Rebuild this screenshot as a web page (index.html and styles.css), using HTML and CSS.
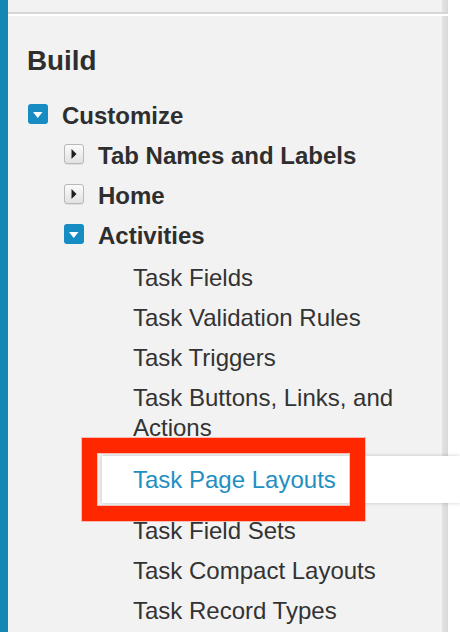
FILE: index.html
```html
<!DOCTYPE html>
<html lang="en">
<head>
<meta charset="utf-8">
<title>Setup - Build</title>
<link rel="stylesheet" href="styles.css">
</head>
<body>
<div class="page">
  <div class="rail"></div>
  <div class="col">
    <div class="top-panel"></div>
    <div class="panel">
      <h2 class="title">Build</h2>
      <ul class="tree">
        <li>
          <div class="row lvl1">
            <span class="tw tw-open"><svg viewBox="0 0 20 20" width="20" height="20"><polygon points="5,8 14.5,8 9.75,14" fill="#fff"/></svg></span>
            <span class="lbl">Customize</span>
          </div>
          <ul class="sub">
            <li>
              <div class="row lvl2">
                <span class="tw tw-closed"><svg viewBox="0 0 20 20" width="20" height="20"><polygon points="7.5,5 12.5,10 7.5,15" fill="#1e1e1e"/></svg></span>
                <span class="lbl">Tab Names and Labels</span>
              </div>
            </li>
            <li>
              <div class="row lvl2">
                <span class="tw tw-closed"><svg viewBox="0 0 20 20" width="20" height="20"><polygon points="7.5,5 12.5,10 7.5,15" fill="#1e1e1e"/></svg></span>
                <span class="lbl">Home</span>
              </div>
            </li>
            <li>
              <div class="row lvl2">
                <span class="tw tw-open"><svg viewBox="0 0 20 20" width="20" height="20"><polygon points="5,8 14.5,8 9.75,14" fill="#fff"/></svg></span>
                <span class="lbl">Activities</span>
              </div>
              <ul class="leaves">
                <li class="leaf">Task Fields</li>
                <li class="leaf">Task Validation Rules</li>
                <li class="leaf">Task Triggers</li>
                <li class="leaf">Task Buttons, Links, and Actions</li>
                <li class="leaf selected">
                  <a class="link" href="#">Task Page Layouts</a>
                  <div class="callout"></div>
                </li>
                <li class="leaf">Task Field Sets</li>
                <li class="leaf">Task Compact Layouts</li>
                <li class="leaf">Task Record Types</li>
              </ul>
            </li>
          </ul>
        </li>
      </ul>
    </div>
  </div>
</div>
</body>
</html>
```
FILE: styles.css
```css
html, body {
  margin: 0;
  padding: 0;
  height: 632px;
  overflow: hidden;
  background: #ffffff;
}

body {
  font-family: "Liberation Sans", Arial, sans-serif;
  color: #333333;
}

.page {
  display: flex;
  height: 632px;
}

.rail {
  width: 8px;
  flex: 0 0 8px;
  background: #1587b3;
}

.col {
  width: 440px;
  flex: 0 0 440px;
  display: flex;
  flex-direction: column;
}

.top-panel {
  height: 12px;
  background: linear-gradient(to right, #f2f2f2 434px, #e3e3e3 434px, #d8d8d8);
  border-bottom: 2px solid #d6d6d6;
  margin-bottom: 2px;
}

.panel {
  flex: 1;
  background: linear-gradient(to right, #f2f2f2 434px, #e3e3e3 434px, #d8d8d8);
  padding: 28px 6px 0 20px;
}

.title {
  margin: 0 0 18px -1px;
  font-size: 27.8px;
  line-height: 34px;
  font-weight: bold;
  color: #2e2e2e;
}

.tree, .sub, .leaves {
  list-style: none;
  margin: 0;
  padding: 0;
}

.row {
  display: flex;
  align-items: flex-start;
  gap: 14px;
  padding: 5px 0;
  line-height: 30px;
  font-size: 24px;
  font-weight: bold;
  color: #2e2e2e;
}

.lvl2 {
  padding-left: 36px;
}

.tw {
  width: 20px;
  height: 20px;
  flex: 0 0 20px;
  margin-top: 3px;
  box-sizing: border-box;
  border-radius: 3px;
  display: block;
}

.tw svg {
  display: block;
}

.tw-open {
  background: #178cc2;
}

.tw-closed {
  background: linear-gradient(#fbfbfb, #e2e2e2);
  border: 1px solid #b9b9b9;
  box-shadow: 0 1px 0 rgba(0, 0, 0, 0.08);
}

.tw-closed svg {
  margin: -1px;
}

.leaves {
  padding-top: 2px;
}

.leaf {
  padding: 5px 0 5px 105px;
  line-height: 30px;
  font-size: 24px;
  color: #333333;
}

.leaf.selected {
  position: relative;
  margin: 8px -18px 8px 74px;
  padding: 9px 0 8px 31px;
  background: #ffffff;
  box-shadow: 0 0 4px rgba(0, 0, 0, 0.2);
}

.link {
  color: #1f8fc2;
  text-decoration: none;
}

.callout {
  position: absolute;
  left: -20px;
  top: -18px;
  width: 283px;
  height: 83px;
  box-sizing: border-box;
  border: 15px solid #ff2700;
  box-shadow: 0 0 0 1px rgba(255, 120, 100, 0.45), inset 0 0 0 1px rgba(255, 150, 130, 0.55);
}
```
